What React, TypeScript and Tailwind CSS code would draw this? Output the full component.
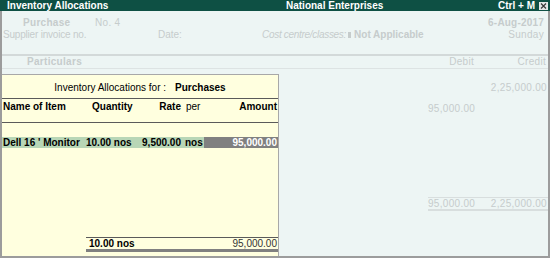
export default function App() {
  const faint = "text-[#c6cccc]";

  return (
    <div className="flex h-[258px] w-[550px] flex-col overflow-hidden bg-[#edf5f4] font-['Liberation_Sans',Arial,sans-serif] text-[10px] leading-[12px]">
      {/* Title bar */}
      <div className="flex h-[11px] items-center bg-[#0e5044] text-[10px] font-bold leading-[11px] text-white">
        <span className="w-[286px] pl-[7px]">Inventory Allocations</span>
        <span>National Enterprises</span>
        <span className="ml-auto">Ctrl + M</span>
        <span className="ml-[4px] mr-[2px] flex h-[8px] w-[9px] items-center justify-center bg-[#e4e8e8]">
          <svg width="7" height="6" viewBox="0 0 7 6">
            <path d="M1 0.5 L6 5.5 M6 0.5 L1 5.5" stroke="#3a3a3a" strokeWidth="1.2" />
          </svg>
        </span>
      </div>

      {/* Voucher body */}
      <div className="relative flex flex-1 flex-col border-b-2 border-l-2 border-r-2 border-[#9c9c9c]">
        <div className="border-b-2 border-[#d3d9d9] pt-[5px] pb-[14px]">
          <div className={`flex h-[13px] items-center ${faint}`}>
            <span className="w-[93px] pl-[21px] font-bold tracking-[0.3px]">Purchase</span>
            <span className="tracking-[0.3px]">No. 4</span>
            <span className="ml-auto pr-[4px] font-bold tracking-[0.2px]">6-Aug-2017</span>
          </div>
          <div className={`flex h-[11px] items-center ${faint}`}>
            <span className="w-[156px] pl-[1px] tracking-[-0.2px]">Supplier invoice no.</span>
            <span className="w-[104px]">Date:</span>
            <span className="italic tracking-[-0.3px]">Cost centre/classes:</span>
            <span className="ml-[2px] mr-[3px] inline-block h-[6px] w-[3px] bg-[#c6cccc]" />
            <span className="font-bold">Not Applicable</span>
            <span className="ml-auto pr-[4px] tracking-[0.3px]">Sunday</span>
          </div>
        </div>

        <div className={`flex h-[13px] items-center border-b border-[#dde3e3] font-bold tracking-[0.3px] ${faint}`}>
          <span className="pl-[25px]">Particulars</span>
          <span className="ml-auto w-[47px] pr-[1px] text-right font-normal">Debit</span>
          <span className="w-[73px] pr-[2px] text-right font-normal">Credit</span>
        </div>

        <div className={`flex flex-col items-end pt-[13px] tracking-[0.3px] ${faint}`}>
          <div className="flex h-[12px]">
            <span className="w-[47px]" />
            <span className="w-[73px] pr-[1px] text-right">2,25,000.00</span>
          </div>
          <div className="mt-[9px] flex h-[12px]">
            <span className="w-[47px] text-right">95,000.00</span>
            <span className="w-[73px]" />
          </div>
          <div className="mt-[82px] flex border-t border-b-2 border-[#d8dede] leading-[11px]">
            <span className="w-[47px] text-right">95,000.00</span>
            <span className="w-[73px] pr-[1px] text-right">2,25,000.00</span>
          </div>
        </div>

        {/* Inventory allocations sub-window */}
        <div className="absolute bottom-0 left-0 top-[63px] flex w-[277px] flex-col border-r border-t border-[#a8a8a8] bg-[#ffffdf] text-black">
          <div className="flex h-[24px] items-start justify-center border-b border-[#5a5a5a] pt-[7px]">
            <span>Inventory Allocations for :</span>
            <span className="ml-[9px] font-bold">Purchases</span>
          </div>
          <div className="flex h-[24px] items-start border-b border-[#5a5a5a] pt-[2px] font-bold">
            <span className="w-[84px] pl-[1px]">Name of Item</span>
            <span className="w-[52px] pl-[6px]">Quantity</span>
            <span className="w-[43px] text-right">Rate</span>
            <span className="w-[23px] pl-[5px] font-normal">per</span>
            <span className="w-[74px] pr-[1px] text-right">Amount</span>
          </div>
          <div className="mt-[14px] flex h-[11px] items-center font-bold">
            <span className="flex h-full w-[202px] items-center bg-[#b8d6b6]">
              <span className="w-[84px] pl-[1px]">Dell 16 ' Monitor</span>
              <span className="w-[52px]">10.00 nos</span>
              <span className="w-[43px] text-right">9,500.00</span>
              <span className="w-[23px] pl-[4px]">nos</span>
            </span>
            <span className="flex h-full w-[74px] items-center justify-end bg-[#808080] pr-[1px] text-white">95,000.00</span>
          </div>
          <div className="mt-auto mb-[4px] ml-[84px] flex flex-col">
            <div className="flex h-[12px] items-center border-t border-[#5a5a5a]">
              <span className="pl-[3px] font-bold">10.00 nos</span>
              <span className="ml-auto pr-[1px] text-[#333]">95,000.00</span>
            </div>
            <div className="h-[3px] bg-[#808080]" />
          </div>
        </div>
      </div>
    </div>
  );
}
